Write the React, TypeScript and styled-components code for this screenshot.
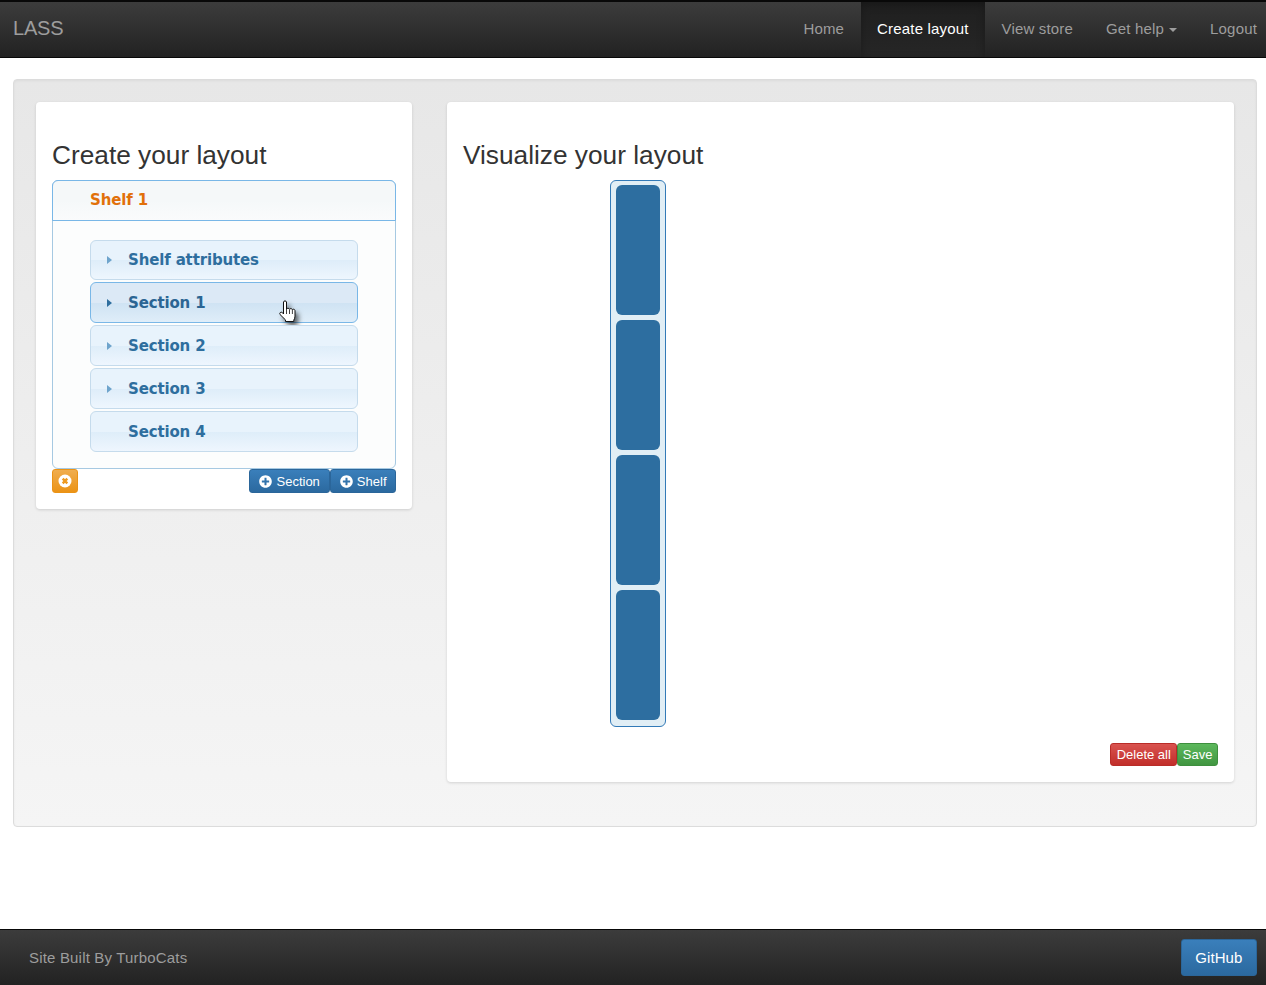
import styled, { createGlobalStyle } from 'styled-components'
import { FaPlusCircle } from 'react-icons/fa'

const GlobalStyle = createGlobalStyle`
	html, body {
		margin: 0;
		padding: 0;
		background: #fff;
		font-family: "Liberation Sans", Arial, sans-serif;
		color: #333;
	}
	* { box-sizing: border-box; }
`

const Page = styled.div`
	height: 985px;
	display: flex;
	flex-direction: column;
	overflow: hidden;
`
const DarkBar = styled.div<{ $foot?: boolean }>`
	height: ${p => (p.$foot ? '56px' : '58px')};
	flex: none;
	display: flex;
	align-items: stretch;
	justify-content: space-between;
	padding: ${p => (p.$foot ? '0 9px 0 29px' : '0 9px 0 13px')};
	background: linear-gradient(to bottom, #3c3c3c 0%, #222 100%);
	border-top: ${p => (p.$foot ? '1px' : '2px')} solid #080808;
	border-bottom: ${p => (p.$foot ? '0' : '1px solid #080808')};
`
const Brand = styled.div`
	font-size: 20px;
	line-height: 52px;
	letter-spacing: -.2px;
	color: #9d9d9d;
`
const Nav = styled.nav`
	display: flex;
	margin-right: -16.5px;
`
const NavItem = styled.div<{ $active?: boolean }>`
	display: flex;
	align-items: center;
	gap: 5px;
	padding: 0 16.5px 2px;
	font-size: 15px;
	letter-spacing: .17px;
	color: ${p => (p.$active ? '#fff' : '#9d9d9d')};
	background: ${p => (p.$active ? 'linear-gradient(to bottom, #1f1f1f 0%, #262626 100%)' : 'transparent')};
	box-shadow: ${p => (p.$active ? 'inset 0 3px 9px rgba(0, 0, 0, .25)' : 'none')};
`
const Caret = styled.span`
	border-top: 4px solid #9d9d9d;
	border-left: 4px solid transparent;
	border-right: 4px solid transparent;
	margin-top: 2px;
`
const Main = styled.main`
	flex: 1;
	padding: 21px 9px 0 13px;
`
const Well = styled.div`
	height: 748px;
	display: flex;
	align-items: flex-start;
	gap: 35px;
	padding: 22px 22px 0;
	background: linear-gradient(to bottom, #e7e7e7 0%, #f5f5f5 100%);
	border: 1px solid #dcdcdc;
	border-radius: 4px;
	box-shadow: inset 0 1px 3px rgba(0, 0, 0, .05), 0 1px 0 rgba(255, 255, 255, .1);
`
const Card = styled.section<{ $wide?: boolean }>`
	width: ${p => (p.$wide ? '787px' : '376px')};
	height: ${p => (p.$wide ? '680px' : '407px')};
	padding: 0 16px;
	display: flex;
	flex-direction: column;
	background: #fff;
	border-radius: 4px;
	box-shadow: 0 1px 3px rgba(0, 0, 0, .14);
`
const Heading = styled.h2`
	margin: 0;
	height: 78px;
	padding-top: 36px;
	font-size: 26.25px;
	line-height: 34px;
	font-weight: 400;
	color: #333;
`
const Accordion = styled.div`
	height: 289px;
	display: flex;
	flex-direction: column;
	border: 1px solid #a6c9e2;
	border-radius: 6px;
	background: #fcfdfd;
`
const ShelfHeader = styled.div`
	height: 41px;
	flex: none;
	margin: -1px -1px 0;
	padding-left: 37px;
	border: 1px solid #79b7e7;
	border-radius: 6px 6px 0 0;
	background: linear-gradient(to bottom, #f5f8f9 0%, #f5f8f9 50%, #fafbfc 100%);
	font-family: "DejaVu Sans", sans-serif;
	font-size: 15px;
	letter-spacing: -.15px;
	font-weight: 700;
	line-height: 39px;
	color: #e17009;
`
const RowList = styled.div`
	padding: 18.6px 37px 0;
	display: flex;
	flex-direction: column;
	gap: 2px;
`
const Row = styled.div<{ $hover?: boolean }>`
	position: relative;
	height: 40.8px;
	display: flex;
	align-items: center;
	padding: 1px 0 0 16px;
	border: 1px solid ${p => (p.$hover ? '#79b7e7' : '#c5dbec')};
	border-radius: 6px;
	background: ${p =>
		p.$hover
			? 'linear-gradient(to bottom, #dce9f6 0%, #dce9f6 50%, #cfe3f3 51%, #dfedf9 100%)'
			: 'linear-gradient(to bottom, #e8f3fc 0%, #e8f3fc 50%, #deedf9 51%, #eef6fe 100%)'};
	font-family: "DejaVu Sans", sans-serif;
	font-size: 15px;
	letter-spacing: -.15px;
	font-weight: 700;
	color: ${p => (p.$hover ? '#2b6593' : '#2e6e9e')};
`
const Arrow = styled.span<{ $dark?: boolean; $hidden?: boolean }>`
	width: 0;
	height: 0;
	flex: none;
	margin-right: 16px;
	border-left: 5px solid ${p => (p.$hidden ? 'transparent' : p.$dark ? '#2e6e9e' : '#6ea4cc')};
	border-top: 4px solid transparent;
	border-bottom: 4px solid transparent;
`
const CursorIcon = styled.svg`
	position: absolute;
	left: 188px;
	top: 17px;
	filter: drop-shadow(3px 4px 2.5px rgba(0, 0, 0, .6));
`
const ButtonRow = styled.div`
	display: flex;
	align-items: flex-start;
`
const Spacer = styled.div`
	flex: 1;
`
const Button = styled.div<{ $color: 'blue' | 'orange' | 'red' | 'green'; $size?: 'big' | 'tight'; $pad?: number }>`
	display: flex;
	align-items: center;
	justify-content: center;
	gap: 4px;
	height: ${p => (p.$size === 'big' ? '37px' : p.$size === 'tight' ? '23px' : '24px')};
	padding: 0 ${p => p.$pad ?? 9}px;
	font-size: ${p => (p.$size === 'big' ? '15px' : '13px')};
	letter-spacing: ${p => (p.$size === 'big' ? '.1px' : '0')};
	color: #fff;
	border-radius: 3px;
	border: 1px solid ${p =>
		({ blue: '#2b669a', orange: '#eb9316', red: '#b92c28', green: '#3e8f3e' })[p.$color]};
	background: ${p =>
		({
			blue: 'linear-gradient(to bottom, #3a7fbb 0%, #2b699f 100%)',
			orange: 'linear-gradient(to bottom, #f0ad4e 0%, #eb9316 100%)',
			red: 'linear-gradient(to bottom, #d9534f 0%, #c12e2a 100%)',
			green: 'linear-gradient(to bottom, #5cb85c 0%, #419641 100%)',
		})[p.$color]};
`
const Stack = styled.div`
	width: 56px;
	height: 547px;
	margin-left: 147px;
	padding: 4px 5px;
	display: flex;
	flex-direction: column;
	gap: 5px;
	flex: none;
	background: #e1eef5;
	border: 1px solid #337ab7;
	border-radius: 6px;
`
const StackCell = styled.div`
	height: 130px;
	flex: none;
	background: #2d6ea0;
	border-radius: 6px;
`
const CardFooter = styled.div`
	display: flex;
	justify-content: flex-end;
	margin-top: 16px;
`
const FooterText = styled.div`
	font-size: 15px;
	line-height: 55px;
	letter-spacing: .18px;
	color: #9d9d9d;
`
const FooterAction = styled.div`
	padding-top: 9px;
`

const rows = ['Shelf attributes', 'Section 1', 'Section 2', 'Section 3', 'Section 4']

const RemoveIcon = () => (
	<svg width="14" height="14" viewBox="0 0 14 14">
		<circle cx="7" cy="7" r="6.5" fill="#fff" />
		<path d="M4.7 4.7l4.600 4.600M9.300 4.700l-4.600 4.600" stroke="#ee9a20" strokeWidth="2.4" />
	</svg>
)

const HandCursor = () => (
	<CursorIcon width="19" height="27" viewBox="0 0 19 27">
		<path
			d="M4.500 2c0-1.400 3-1.400 3 0v7c.6-1 2.400-1 3 .2c.6-.9 2.400-.8 2.900.4c.7-.7 2.400-.5 2.600 1v5.500c0 1.800-.6 2.800-1.200 4v1.400H6.500v-1.600L1 14.500c-1-1.600 1-3 2.300-2l1.200 1.500z"
			fill="#fff"
			stroke="#111"
			strokeWidth="1"
		/>
		<path d="M7.500 9v5M10.500 9.500v4.500M13.400 10v4" stroke="#111" strokeWidth=".8" fill="none" />
	</CursorIcon>
)

const App = () => (
	<Page>
		<GlobalStyle />
		<DarkBar>
			<Brand>LASS</Brand>
			<Nav>
				<NavItem>Home</NavItem>
				<NavItem $active>Create layout</NavItem>
				<NavItem>View store</NavItem>
				<NavItem>Get help <Caret /></NavItem>
				<NavItem>Logout</NavItem>
			</Nav>
		</DarkBar>
		<Main>
			<Well>
				<Card>
					<Heading>Create your layout</Heading>
					<Accordion>
						<ShelfHeader>Shelf 1</ShelfHeader>
						<RowList>
							{rows.map((row, i) => (
								<Row key={row} $hover={i === 1}>
									<Arrow $dark={i === 1} $hidden={i === 4} />
									{row}
									{i === 1 && <HandCursor />}
								</Row>
							))}
						</RowList>
					</Accordion>
					<ButtonRow>
						<Button $color="orange" $pad={5}><RemoveIcon /></Button>
						<Spacer />
						<Button $color="blue" $pad={9.5}><FaPlusCircle size={13} />Section</Button>
						<Button $color="blue" $pad={8.5}><FaPlusCircle size={13} />Shelf</Button>
					</ButtonRow>
				</Card>
				<Card $wide>
					<Heading>Visualize your layout</Heading>
					<Stack>
						<StackCell />
						<StackCell />
						<StackCell />
						<StackCell />
					</Stack>
					<CardFooter>
						<Button $color="red" $size="tight" $pad={5.5}>Delete all</Button>
						<Button $color="green" $size="tight" $pad={4.5}>Save</Button>
					</CardFooter>
				</Card>
			</Well>
		</Main>
		<DarkBar $foot>
			<FooterText>Site Built By TurboCats</FooterText>
			<FooterAction>
				<Button $color="blue" $size="big" $pad={13.5}>GitHub</Button>
			</FooterAction>
		</DarkBar>
	</Page>
)

export default App
